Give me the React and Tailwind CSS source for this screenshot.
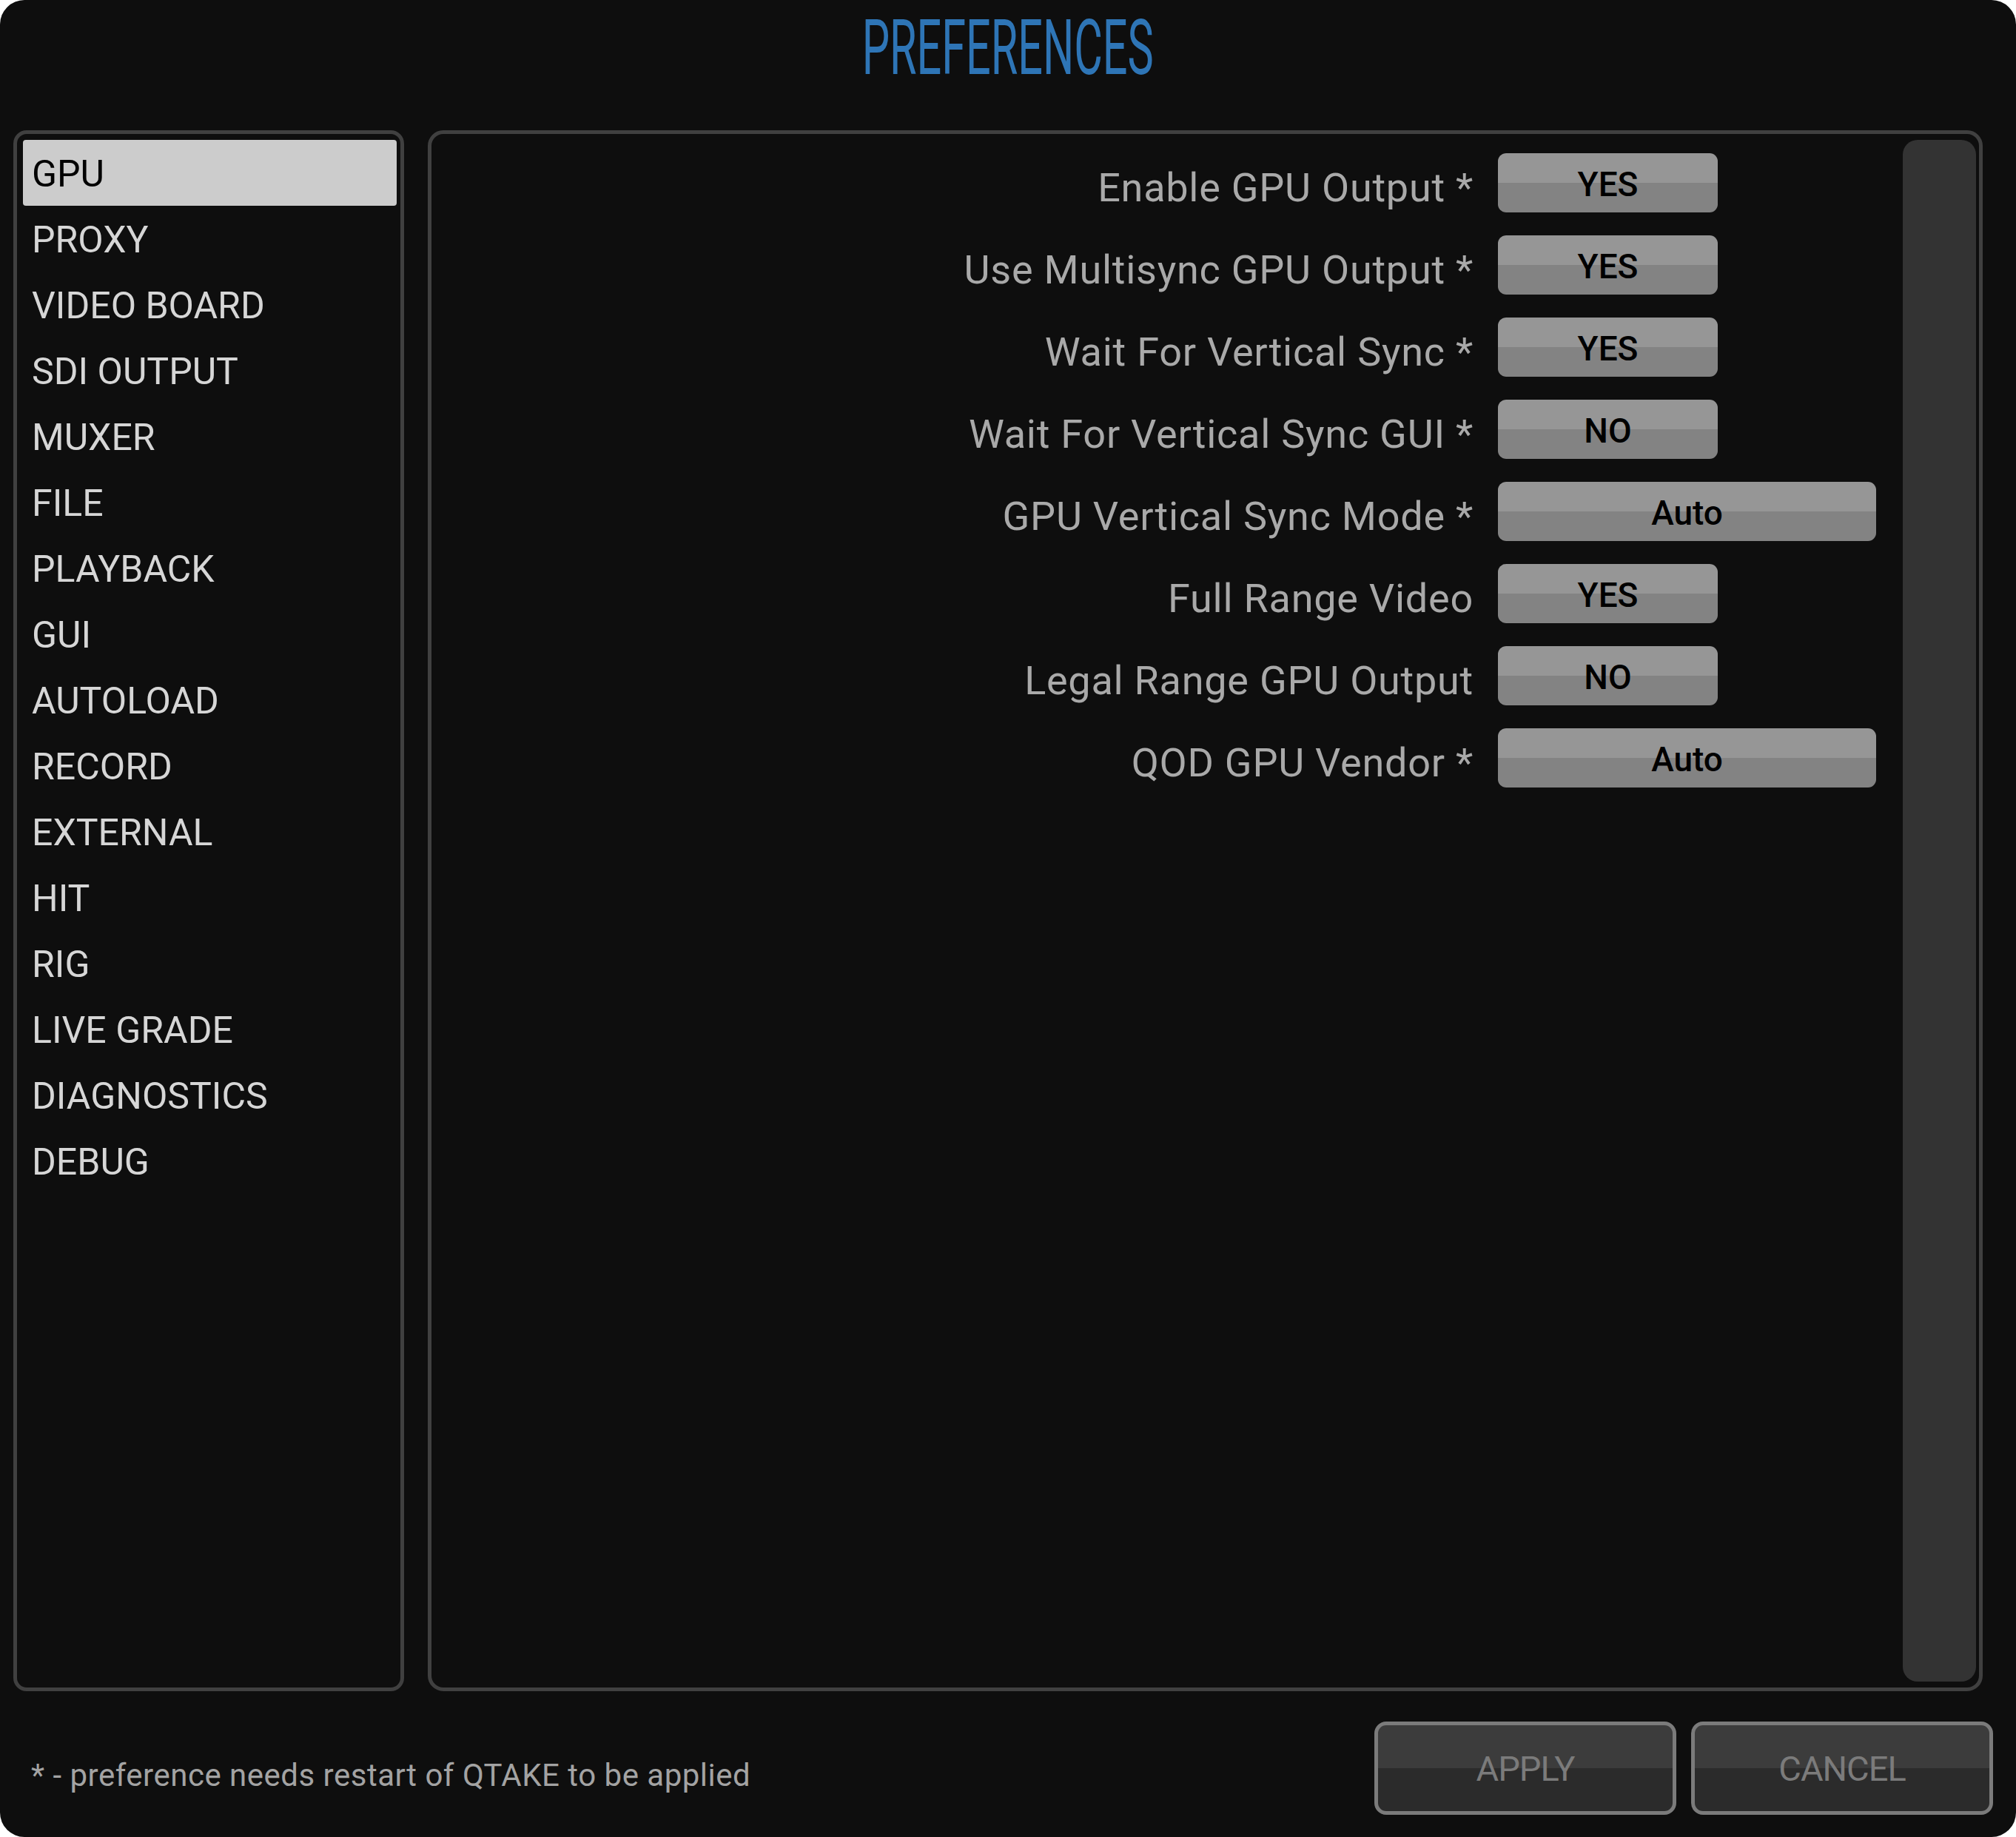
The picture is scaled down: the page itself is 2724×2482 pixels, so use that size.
import React from "react";

const categories = [
  "GPU", "PROXY", "VIDEO BOARD", "SDI OUTPUT", "MUXER", "FILE", "PLAYBACK", "GUI",
  "AUTOLOAD", "RECORD", "EXTERNAL", "HIT", "RIG", "LIVE GRADE", "DIAGNOSTICS", "DEBUG",
];

const rows = [
  { label: "Enable GPU Output *", value: "YES", wide: false },
  { label: "Use Multisync GPU Output *", value: "YES", wide: false },
  { label: "Wait For Vertical Sync *", value: "YES", wide: false },
  { label: "Wait For Vertical Sync GUI *", value: "NO", wide: false },
  { label: "GPU Vertical Sync Mode *", value: "Auto", wide: true },
  { label: "Full Range Video", value: "YES", wide: false },
  { label: "Legal Range GPU Output", value: "NO", wide: false },
  { label: "QOD GPU Vendor *", value: "Auto", wide: true },
];

const font = { fontFamily: "Roboto, 'Noto Sans', sans-serif" };

export default function App() {
  return (
    <div className="w-[2724px] h-[2482px] bg-white" style={font}>
      <div className="w-full h-full bg-[#0e0e0e] rounded-[33px] flex flex-col overflow-hidden">
        {/* Title */}
        <div className="h-[176px] flex justify-center pt-[13px]">
          <div className="inline-block scale-x-[0.57] text-[104px] leading-none text-[#2e75b6] font-normal whitespace-nowrap">
            PREFERENCES
          </div>
        </div>

        {/* Panels */}
        <div className="h-[2109px] flex pl-[18px] pr-[45px] gap-[32px]">
          <div className="w-[528px] h-full border-[5px] border-[#404040] rounded-[18px] pt-[8px] pl-[8px] pr-[5px] flex flex-col">
            {categories.map((c, i) => (
              <div
                key={c}
                className={
                  i === 0
                    ? "h-[89px] shrink-0 flex items-center pl-[12px] pt-[3px] bg-[#cccccc] rounded-[4px] text-black text-[50px] leading-none"
                    : "h-[89px] shrink-0 flex items-center pl-[12px] pt-[3px] text-[#d6d6d6] text-[50px] leading-none"
                }
              >
                {c}
              </div>
            ))}
          </div>

          <div className="w-[2101px] h-full border-[5px] border-[#404040] rounded-[21px] flex">
            <div className="w-[1988px] pt-[26px] flex flex-col gap-[31px]">
              {rows.map((r) => (
                <div key={r.label} className="h-[80px] flex items-center">
                  <div className="w-[1408px] text-right text-[54px] leading-none tracking-[0.75px] text-[#a9a9a9] mt-[13px] whitespace-nowrap">
                    {r.label}
                  </div>
                  <div
                    className={
                      (r.wide ? "w-[511px]" : "w-[297px]") +
                      " ml-[33px] h-[80px] pt-[4px] rounded-[11px] bg-[linear-gradient(to_bottom,#969696_50%,#838383_50%)] flex items-center justify-center text-black text-[46px] leading-none font-medium"
                    }
                  >
                    {r.value}
                  </div>
                </div>
              ))}
            </div>
            <div className="w-[99px] mt-[8px] mb-[8px] mr-[4px] bg-[#333333] rounded-[20px]" />
          </div>
        </div>

        {/* Footer */}
        <div className="h-[197px] flex pt-[41px] pb-[30px] pl-[42px] pr-[31px]">
          <div className="self-start mt-[52px] text-[42px] leading-none tracking-[0.5px] text-[#a3a3a3] whitespace-nowrap">
            * - preference needs restart of QTAKE to be applied
          </div>
          <div className="ml-auto flex gap-[20px]">
            {["APPLY", "CANCEL"].map((b) => (
              <div
                key={b}
                className="w-[408px] h-[126px] border-[5px] border-[#7b7b7b] rounded-[16px] bg-[linear-gradient(to_bottom,#3c3c3c_50%,#2b2b2b_50%)] flex items-center justify-center text-[47px] leading-none tracking-[-1px] text-[#7b7b7b]"
              >
                {b}
              </div>
            ))}
          </div>
        </div>
      </div>
    </div>
  );
}
